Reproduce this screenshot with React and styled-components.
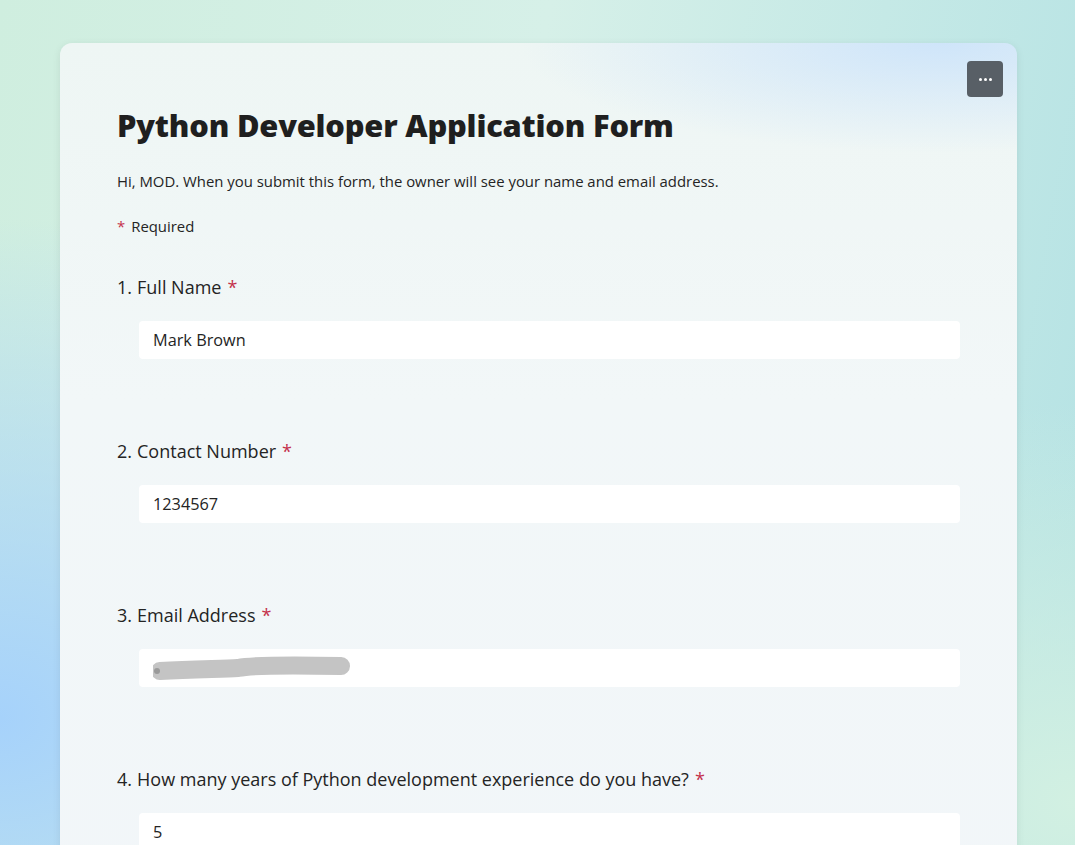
import React from "react";
import styled, { createGlobalStyle } from "styled-components";

const GlobalStyle = createGlobalStyle`
  html, body {
    margin: 0;
    padding: 0;
    height: 100%;
  }
  body {
    font-family: "Open Sans", "Noto Sans", sans-serif;
    color: #242424;
    overflow: hidden;
  }
`;

const Page = styled.div`
  width: 1075px;
  height: 845px;
  overflow: hidden;
  box-sizing: border-box;
  padding: 43px 58px 0 60px;
  background:
    radial-gradient(ellipse 600px 500px at 0% 85%, #a6d2fb 0%, rgba(166, 210, 251, 0) 100%),
    radial-gradient(ellipse 500px 400px at 100% 95%, #d2f0e2 0%, rgba(210, 240, 226, 0) 100%),
    linear-gradient(100deg, #cfeedf 0%, #d6f0e8 45%, #b4e2e4 100%);
`;

const Card = styled.div`
  position: relative;
  height: 900px;
  border-radius: 12px;
  box-sizing: border-box;
  padding: 62px 57px 0 57px;
  background:
    radial-gradient(ellipse 420px 110px at 92% 0%, rgba(205, 228, 250, 0.95) 0%, rgba(205, 228, 250, 0) 100%),
    linear-gradient(180deg, #eef6f4 0%, #f2f7f8 40%, #f2f6f9 100%);
  box-shadow: 0 2px 8px rgba(0, 0, 0, 0.08);
`;

const MoreButton = styled.button`
  position: absolute;
  top: 18px;
  right: 14px;
  width: 36px;
  height: 36px;
  border: none;
  border-radius: 4px;
  background: #585f66;
  display: flex;
  align-items: center;
  justify-content: center;
  gap: 2px;
  padding: 0;
`;

const Dot = styled.span`
  width: 3px;
  height: 3px;
  border-radius: 50%;
  background: #fff;
`;

const Title = styled.h1`
  margin: 0;
  font-size: 30.8px;
  font-weight: 800;
  line-height: 40px;
  color: #1f1f1f;
  letter-spacing: -0.2px;
`;

const Intro = styled.p`
  margin: 26px 0 0;
  font-size: 14.9px;
  line-height: 20px;
  color: #242424;
`;

const RequiredNote = styled.p`
  margin: 25px 0 0;
  font-size: 14.9px;
  line-height: 20px;
`;

const Star = styled.span`
  color: #c4314b;
  margin-left: ${(p) => (p.$left ? "0" : "6px")};
  margin-right: ${(p) => (p.$left ? "6px" : "0")};
`;

const Questions = styled.div`
  margin-top: 39px;
  display: flex;
  flex-direction: column;
  gap: 80px;
`;

const Question = styled.div`
  display: flex;
  flex-direction: column;
`;

const Label = styled.div`
  font-size: 18px;
  line-height: 24px;
  color: #242424;
  display: flex;
`;

const Num = styled.span`
  margin-right: 5px;
`;

const Field = styled.div`
  margin: 22px 0 0 22px;
  height: 38px;
  width: 821px;
  background: #fff;
  border-radius: 4px;
  display: flex;
  align-items: center;
  padding: 0 14px;
  box-sizing: border-box;
  font-size: 16.3px;
  color: #242424;
`;

const questions = [
  { label: "Full Name", value: "Mark Brown" },
  { label: "Contact Number", value: "1234567" },
  { label: "Email Address", redacted: true },
  { label: "How many years of Python development experience do you have?", value: "5" },
];

function Redaction() {
  return (
    <svg width="200" height="24" viewBox="0 0 200 24">
      <path
        d="M7 15 C 40 13, 70 13, 85 12 C 100 9, 140 9, 188 10"
        stroke="#c4c4c4"
        strokeWidth="18"
        strokeLinecap="round"
        fill="none"
      />
      <circle cx="4" cy="15" r="3" fill="#9a9a9a" />
    </svg>
  );
}

export default function App() {
  return (
    <Page>
      <GlobalStyle />
      <Card>
        <MoreButton aria-label="More options">
          <Dot />
          <Dot />
          <Dot />
        </MoreButton>
        <Title>Python Developer Application Form</Title>
        <Intro>
          Hi, MOD. When you submit this form, the owner will see your name and email address.
        </Intro>
        <RequiredNote>
          <Star $left>*</Star>Required
        </RequiredNote>
        <Questions>
          {questions.map((q, i) => (
            <Question key={q.label}>
              <Label>
                <Num>{i + 1}.</Num>
                <span>
                  {q.label}
                  <Star>*</Star>
                </span>
              </Label>
              <Field>{q.redacted ? <Redaction /> : q.value}</Field>
            </Question>
          ))}
        </Questions>
      </Card>
    </Page>
  );
}
